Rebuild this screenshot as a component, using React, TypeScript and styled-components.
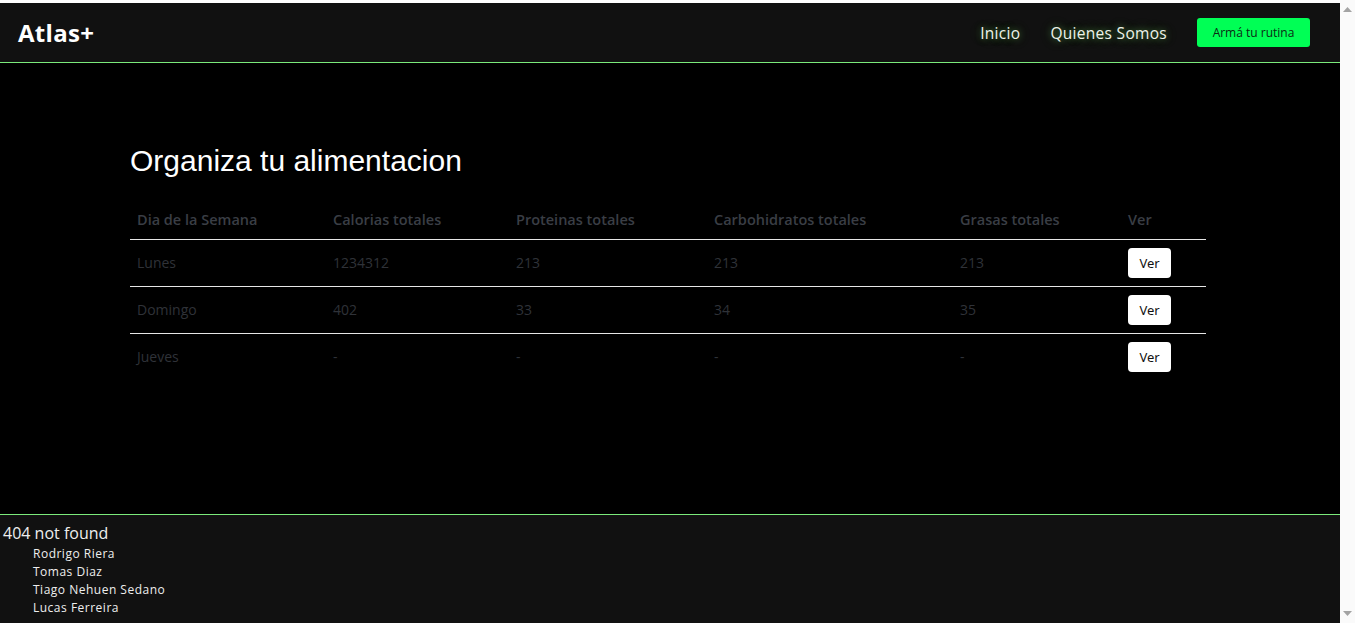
import React from "react";
import styled, { createGlobalStyle } from "styled-components";

const GlobalStyle = createGlobalStyle`
  html, body { margin: 0; padding: 0; background: #ffffff; overflow: hidden; }
  * { box-sizing: border-box; }
`;

const Shell = styled.div`
  display: flex;
  height: 623px;
`;

const Page = styled.div`
  flex: 1;
  display: flex;
  flex-direction: column;
  padding-top: 3px;
  background: #ffffff;
`;

const ScrollTrack = styled.div`
  width: 15px;
  background: #fafafa;
  display: flex;
  flex-direction: column;
  justify-content: space-between;
  align-items: center;
  padding: 7px 0 7px 0;
`;

const NavBar = styled.header`
  height: 60px;
  flex-shrink: 0;
  background: #111111;
  border-bottom: 1px solid #7bea7b;
  display: flex;
  align-items: center;
  justify-content: space-between;
  padding: 0 30px 0 18px;
`;

const Logo = styled.div`
  font-family: "Open Sans", "Noto Sans", sans-serif;
  font-weight: 700;
  font-size: 24px;
  color: #ffffff;
  letter-spacing: 0.3px;
`;

const NavLinks = styled.nav`
  display: flex;
  align-items: center;
  gap: 30px;
`;

const NavLink = styled.a`
  font-family: "Open Sans", "Noto Sans", sans-serif;
  font-size: 15.5px;
  color: #eef3ea;
  text-decoration: none;
  letter-spacing: 0.3px;
  text-shadow: 0 0 6px rgba(110, 210, 90, 0.55), 0 0 14px rgba(110, 210, 90, 0.3);
`;

const CtaButton = styled.button`
  width: 113px;
  height: 29px;
  border: none;
  border-radius: 3px;
  background: #00ff55;
  color: #0c2a14;
  font-family: "Open Sans", "Noto Sans", sans-serif;
  font-size: 12px;
  cursor: pointer;
`;

const Main = styled.main`
  height: 451px;
  flex-shrink: 0;
  background: #000;
  padding: 80px 0 0 130px;
`;

const Content = styled.div`
  width: 1076px;
`;

const Title = styled.h1`
  margin: 0 0 21px 0;
  font-family: "Liberation Sans", Arial, sans-serif;
  font-weight: 400;
  font-size: 30px;
  line-height: 36px;
  color: #ffffff;
`;

const Table = styled.table`
  width: 100%;
  border-collapse: collapse;
  font-family: "Open Sans", "Noto Sans", sans-serif;
`;

const HeadCell = styled.th<{ $w: number }>`
  width: ${(p) => p.$w}px;
  text-align: left;
  padding: 8px 7px;
  height: 39px;
  font-size: 14.5px;
  font-weight: 600;
  color: #3a3e45;
  border-bottom: 1px solid #e6e6e6;
`;

const Row = styled.tr`
  & + & td {
    border-top: 1px solid #e6e6e6;
  }
`;

const Cell = styled.td`
  padding: 8px 7px;
  height: 46px;
  font-size: 14px;
  color: #2f3238;
  vertical-align: middle;
`;

const ViewButton = styled.button`
  width: 43px;
  height: 30px;
  border: none;
  border-radius: 4px;
  background: #ffffff;
  color: #111;
  font-family: "Noto Sans", "Open Sans", sans-serif;
  font-size: 13px;
  padding: 0;
`;

const Footer = styled.footer`
  flex: 1;
  background: #111111;
  border-top: 1px solid #7bea7b;
  padding: 8px 0 0 3px;
  font-family: "Open Sans", "Noto Sans", sans-serif;
`;

const FooterTitle = styled.div`
  font-size: 16px;
  color: #eeeeee;
  line-height: 20px;
`;

const NameList = styled.ul`
  list-style: none;
  margin: 2px 0 0 0;
  padding: 0 0 0 30px;
`;

const Name = styled.li`
  font-size: 12px;
  line-height: 18px;
  letter-spacing: 0.5px;
  color: #eeeeee;
`;

const Arrow = ({ down }: { down?: boolean }) => (
  <svg width="9" height="5" viewBox="0 0 9 5">
    <polygon points={down ? "0,0 9,0 4.5,5" : "4.5,0 9,5 0,5"} fill="#a3a3a3" />
  </svg>
);

const columns = [
  { label: "Dia de la Semana", w: 196 },
  { label: "Calorias totales", w: 183 },
  { label: "Proteinas totales", w: 198 },
  { label: "Carbohidratos totales", w: 246 },
  { label: "Grasas totales", w: 168 },
  { label: "Ver", w: 85 },
];

const rows = [
  ["Lunes", "1234312", "213", "213", "213"],
  ["Domingo", "402", "33", "34", "35"],
  ["Jueves", "-", "-", "-", "-"],
];

const names = ["Rodrigo Riera", "Tomas Diaz", "Tiago Nehuen Sedano", "Lucas Ferreira"];

export default function App() {
  return (
    <>
      <GlobalStyle />
      <Shell>
        <Page>
          <NavBar>
            <Logo>Atlas+</Logo>
            <NavLinks>
              <NavLink href="#">Inicio</NavLink>
              <NavLink href="#">Quienes Somos</NavLink>
              <CtaButton>Armá tu rutina</CtaButton>
            </NavLinks>
          </NavBar>
          <Main>
            <Content>
              <Title>Organiza tu alimentacion</Title>
              <Table>
                <thead>
                  <tr>
                    {columns.map((c) => (
                      <HeadCell key={c.label} $w={c.w}>
                        {c.label}
                      </HeadCell>
                    ))}
                  </tr>
                </thead>
                <tbody>
                  {rows.map((r) => (
                    <Row key={r[0]}>
                      {r.map((v, i) => (
                        <Cell key={i}>{v}</Cell>
                      ))}
                      <Cell>
                        <ViewButton>Ver</ViewButton>
                      </Cell>
                    </Row>
                  ))}
                </tbody>
              </Table>
            </Content>
          </Main>
          <Footer>
            <FooterTitle>404 not found</FooterTitle>
            <NameList>
              {names.map((n) => (
                <Name key={n}>{n}</Name>
              ))}
            </NameList>
          </Footer>
        </Page>
        <ScrollTrack aria-hidden>
          <Arrow />
          <Arrow down />
        </ScrollTrack>
      </Shell>
    </>
  );
}
